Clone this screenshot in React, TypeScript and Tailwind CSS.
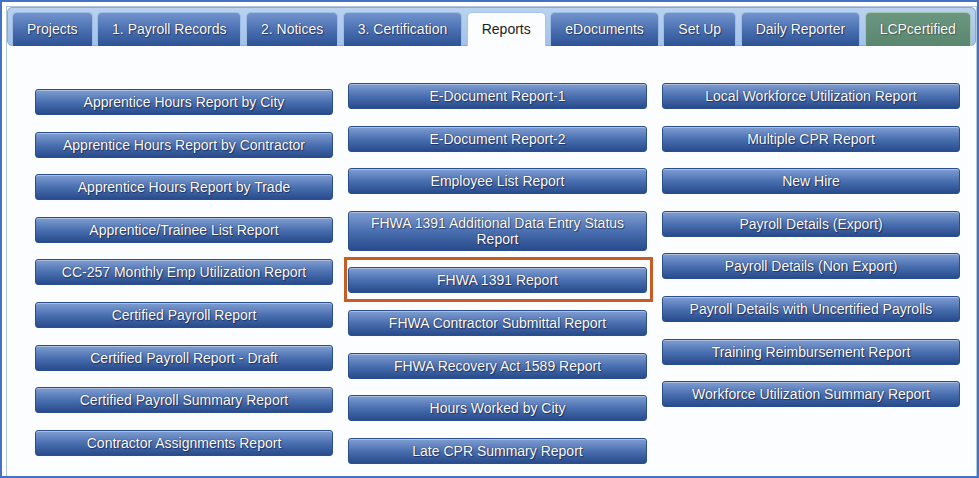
import React from 'react'

const tabs = [
  { label: 'Projects' },
  { label: '1. Payroll Records' },
  { label: '2. Notices' },
  { label: '3. Certification' },
  { label: 'Reports', active: true },
  { label: 'eDocuments' },
  { label: 'Set Up' },
  { label: 'Daily Reporter' },
  { label: 'LCPcertified', green: true },
]

const col1 = [
  'Apprentice Hours Report by City',
  'Apprentice Hours Report by Contractor',
  'Apprentice Hours Report by Trade',
  'Apprentice/Trainee List Report',
  'CC-257 Monthly Emp Utilization Report',
  'Certified Payroll Report',
  'Certified Payroll Report - Draft',
  'Certified Payroll Summary Report',
  'Contractor Assignments Report',
]

const col2 = [
  'E-Document Report-1',
  'E-Document Report-2',
  'Employee List Report',
  'FHWA 1391 Additional Data Entry Status Report',
  'FHWA 1391 Report',
  'FHWA Contractor Submittal Report',
  'FHWA Recovery Act 1589 Report',
  'Hours Worked by City',
  'Late CPR Summary Report',
]

const col3 = [
  'Local Workforce Utilization Report',
  'Multiple CPR Report',
  'New Hire',
  'Payroll Details (Export)',
  'Payroll Details (Non Export)',
  'Payroll Details with Uncertified Payrolls',
  'Training Reimbursement Report',
  'Workforce Utilization Summary Report',
]

function ReportButton({ label, highlighted }: { label: string; highlighted?: boolean }) {
  const tall = label.length > 42
  return (
    <div className="relative">
      {highlighted && (
        <div className="pointer-events-none absolute -top-[10px] -bottom-[9px] -left-[4px] -right-[6px] border-[3px] border-[#c95c22]" />
      )}
      <button
        className={`w-full rounded-[3px] border border-[#2b4e8c] bg-gradient-to-b from-[#809ed2] via-[#4b70b1] to-[#274b8b] px-[14px] text-center text-[14px] leading-[16px] text-white shadow-[inset_0_1px_0_rgba(255,255,255,0.35)] [text-shadow:0_0_1px_rgba(0,0,30,0.7),1px_1px_1px_rgba(0,0,40,0.45)] ${
          tall ? 'h-[40px]' : 'h-[26px]'
        }`}
      >
        {label}
      </button>
    </div>
  )
}

export default function App() {
  return (
    <div className="h-[478px] w-[979px] border-2 border-[#4472c4] bg-white pl-[4px] pt-[4px] font-['Liberation_Sans',Arial,sans-serif]">
      <div className="flex h-full flex-col border border-b-0 border-[#b3c6dc] bg-[#fbfdfe]">
        {/* tab bar */}
        <div className="flex gap-[4.5px] rounded-[5px] border border-[#84a9da] bg-gradient-to-b from-[#b9d2f0] to-[#a3c2e9] px-[4px] pt-[4px]">
          {tabs.map((t) => (
            <div
              key={t.label}
              className={`-mb-px flex h-[34px] shrink-0 items-center whitespace-nowrap rounded-t-[5px] border border-b-0 px-[14px] text-[14px] ${
                t.active
                  ? 'border-[#a8c4e6] bg-[#fbfdfe] text-[#1e1e1e]'
                  : t.green
                    ? 'border-[#a5c4b5] bg-gradient-to-b from-[#6c977f] to-[#5a8670] text-white [text-shadow:0_0_1px_rgba(0,0,0,0.5),1px_1px_1px_rgba(0,0,0,0.3)]'
                    : 'border-[#9dbbe4] bg-gradient-to-b from-[#7294cd] via-[#4b70b1] to-[#2d5395] text-white [text-shadow:0_0_1px_rgba(0,0,30,0.7),1px_1px_1px_rgba(0,0,40,0.45)]'
              }`}
            >
              {t.label}
            </div>
          ))}
        </div>

        {/* report buttons */}
        <div className="grid grid-cols-[298px_299px_298px] items-start gap-x-[15px] pl-[28px] pt-[37px]">
          <div className="mt-[6px] flex flex-col gap-[16.6px]">
            {col1.map((l) => (
              <ReportButton key={l} label={l} />
            ))}
          </div>
          <div className="flex flex-col gap-[16.6px]">
            {col2.map((l) => (
              <ReportButton key={l} label={l} highlighted={l === 'FHWA 1391 Report'} />
            ))}
          </div>
          <div className="flex flex-col gap-[16.6px]">
            {col3.map((l) => (
              <ReportButton key={l} label={l} />
            ))}
          </div>
        </div>
      </div>
    </div>
  )
}
